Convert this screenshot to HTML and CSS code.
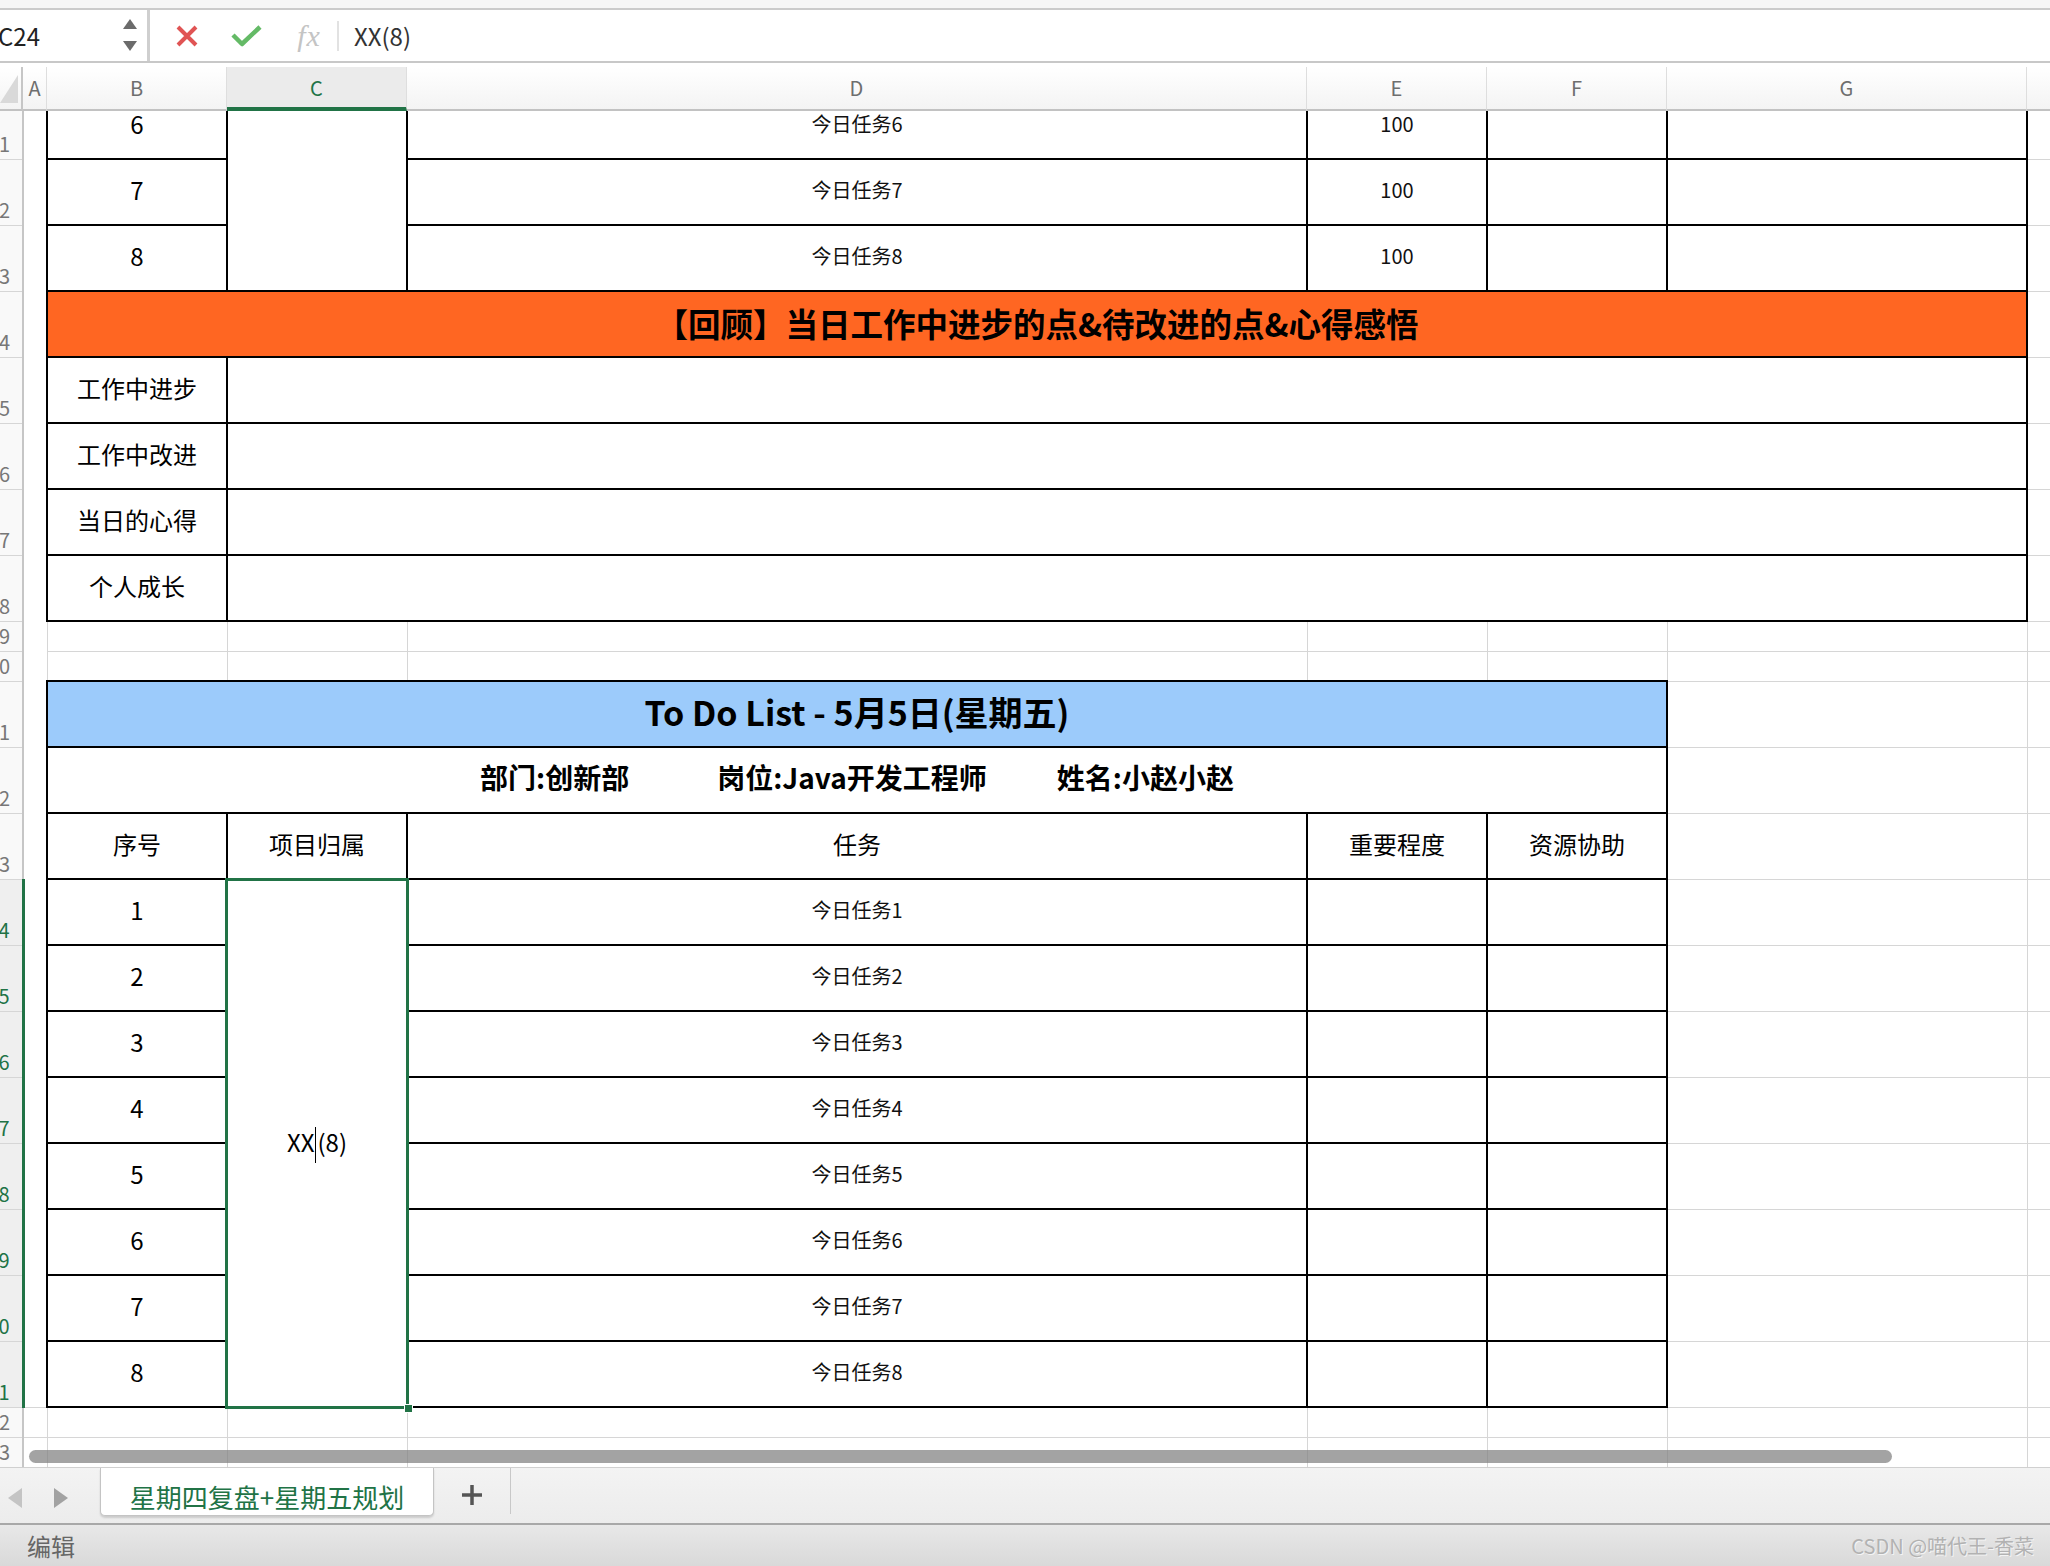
FILE: index.html
```html
<!DOCTYPE html>
<html lang="zh-CN">
<head>
<meta charset="utf-8">
<title>星期四复盘+星期五规划</title>
<link rel="stylesheet" href="styles.css">
</head>
<body>
<div class="app">
  <div class="topstrip"></div>
  <div class="formulabar">
    <div class="namebox">
      <span class="ref">C24</span>
      <svg class="spin" width="14" height="33" viewBox="0 0 14 33"><path d="M7 0 L14 10 L0 10Z" fill="#6b6b6b"/><path d="M0 22 L14 22 L7 32Z" fill="#6b6b6b"/></svg>
    </div>
    <div class="fbtn"><svg width="24" height="22" viewBox="0 0 24 22"><path d="M3 2 L21 20 M21 2 L3 20" stroke="#e05454" stroke-width="4" fill="none"/></svg></div>
    <div class="fbtn"><svg width="32" height="22" viewBox="0 0 32 22"><path d="M2 10 L11 19 L29 2" stroke="#64ba66" stroke-width="4.5" fill="none" stroke-linejoin="round"/></svg></div>
    <div class="fbtn fx">fx</div>
    <div class="fsep"></div>
    <div class="fcontent">XX(8)</div>
  </div>
  <div class="fbline"></div>
  <div class="colheads">
    <div class="ch corner"><svg class="tri" width="18" height="28" viewBox="0 0 18 28"><path d="M18 0 L18 28 L0 28Z" fill="#d9d9d9"/></svg></div>
    <div class="ch w-a">A</div>
    <div class="ch w-b">B</div>
    <div class="ch w-c sel">C</div>
    <div class="ch w-d">D</div>
    <div class="ch w-e">E</div>
    <div class="ch w-f">F</div>
    <div class="ch w-g">G</div>
    <div class="ch w-h"></div>
  </div>
  <div class="sheet">
    <table class="grid">
      <colgroup>
        <col class="w-rh"><col class="w-a"><col class="w-b"><col class="w-c"><col class="w-d"><col class="w-e"><col class="w-f"><col class="w-g"><col class="w-h">
      </colgroup>
      <tr class="h66"><th class="rh"><div>11</div></th><td class="a"></td><td class="k n">6</td><td class="k" rowspan="3"></td><td class="k s">今日任务6</td><td class="k s">100</td><td class="k"></td><td class="k"></td><td></td></tr>
      <tr class="h66"><th class="rh"><div>12</div></th><td class="a"></td><td class="k n">7</td><td class="k s">今日任务7</td><td class="k s">100</td><td class="k"></td><td class="k"></td><td></td></tr>
      <tr class="h66"><th class="rh"><div>13</div></th><td class="a"></td><td class="k n">8</td><td class="k s">今日任务8</td><td class="k s">100</td><td class="k"></td><td class="k"></td><td></td></tr>
      <tr class="h66"><th class="rh"><div>14</div></th><td class="a"></td><td class="k orange" colspan="6">【回顾】当日工作中进步的点&amp;待改进的点&amp;心得感悟</td><td></td></tr>
      <tr class="h66"><th class="rh"><div>15</div></th><td class="a"></td><td class="k l">工作中进步</td><td class="k" colspan="5"></td><td></td></tr>
      <tr class="h66"><th class="rh"><div>16</div></th><td class="a"></td><td class="k l">工作中改进</td><td class="k" colspan="5"></td><td></td></tr>
      <tr class="h66"><th class="rh"><div>17</div></th><td class="a"></td><td class="k l">当日的心得</td><td class="k" colspan="5"></td><td></td></tr>
      <tr class="h66"><th class="rh"><div>18</div></th><td class="a"></td><td class="k l">个人成长</td><td class="k" colspan="5"></td><td></td></tr>
      <tr class="h30"><th class="rh"><div>19</div></th><td class="a"></td><td></td><td></td><td></td><td></td><td></td><td></td><td></td></tr>
      <tr class="h30"><th class="rh"><div>20</div></th><td class="a"></td><td></td><td></td><td></td><td></td><td></td><td></td><td></td></tr>
      <tr class="h66"><th class="rh"><div>21</div></th><td class="a"></td><td class="k blue" colspan="5">To Do List - 5月5日(星期五)</td><td></td><td></td></tr>
      <tr class="h66"><th class="rh"><div>22</div></th><td class="a"></td><td class="k info" colspan="5"><span>部门:创新部</span><span class="gap1">岗位:Java开发工程师</span><span class="gap2">姓名:小赵小赵</span></td><td></td><td></td></tr>
      <tr class="h66"><th class="rh"><div>23</div></th><td class="a"></td><td class="k l">序号</td><td class="k l">项目归属</td><td class="k l">任务</td><td class="k l">重要程度</td><td class="k l">资源协助</td><td></td><td></td></tr>
      <tr class="h66"><th class="rh sel"><div>24</div></th><td class="a"></td><td class="k n">1</td><td class="k l cur" rowspan="8"><div class="selbox"><i class="handle"></i></div>XX<span class="caret"></span>(8)</td><td class="k s">今日任务1</td><td class="k"></td><td class="k"></td><td></td><td></td></tr>
      <tr class="h66"><th class="rh sel"><div>25</div></th><td class="a"></td><td class="k n">2</td><td class="k s">今日任务2</td><td class="k"></td><td class="k"></td><td></td><td></td></tr>
      <tr class="h66"><th class="rh sel"><div>26</div></th><td class="a"></td><td class="k n">3</td><td class="k s">今日任务3</td><td class="k"></td><td class="k"></td><td></td><td></td></tr>
      <tr class="h66"><th class="rh sel"><div>27</div></th><td class="a"></td><td class="k n">4</td><td class="k s">今日任务4</td><td class="k"></td><td class="k"></td><td></td><td></td></tr>
      <tr class="h66"><th class="rh sel"><div>28</div></th><td class="a"></td><td class="k n">5</td><td class="k s">今日任务5</td><td class="k"></td><td class="k"></td><td></td><td></td></tr>
      <tr class="h66"><th class="rh sel"><div>29</div></th><td class="a"></td><td class="k n">6</td><td class="k s">今日任务6</td><td class="k"></td><td class="k"></td><td></td><td></td></tr>
      <tr class="h66"><th class="rh sel"><div>30</div></th><td class="a"></td><td class="k n">7</td><td class="k s">今日任务7</td><td class="k"></td><td class="k"></td><td></td><td></td></tr>
      <tr class="h66"><th class="rh sel"><div>31</div></th><td class="a"></td><td class="k n">8</td><td class="k s">今日任务8</td><td class="k"></td><td class="k"></td><td></td><td></td></tr>
      <tr class="h30"><th class="rh"><div>32</div></th><td class="a2"></td><td></td><td></td><td></td><td></td><td></td><td></td><td></td></tr>
      <tr class="h30"><th class="rh"><div>33</div></th><td class="a2"></td><td></td><td></td><td></td><td></td><td></td><td></td><td></td></tr>
      <tr class="h30"><th class="rh"><div>34</div></th><td class="a2"></td><td></td><td></td><td></td><td></td><td></td><td></td><td></td></tr>
    </table>
    <div class="hscroll"></div>
  </div>
  <div class="tabbar">
    <div class="navs">
      <svg width="14" height="20" viewBox="0 0 14 20"><path d="M14 0 L14 20 L0 10Z" fill="#c4c4c4"/></svg>
      <svg width="14" height="20" viewBox="0 0 14 20"><path d="M0 0 L14 10 L0 20Z" fill="#a2a2a2"/></svg>
    </div>
    <div class="tab">星期四复盘+星期五规划</div>
    <div class="addtab"><svg width="20" height="20" viewBox="0 0 20 20"><path d="M10 0 V20 M0 10 H20" stroke="#555" stroke-width="3.5"/></svg></div>
    <div class="tabsep"></div>
  </div>
  <div class="status">
    <span class="mode">编辑</span>
    <span class="mark">CSDN @喵代王-香菜</span>
  </div>
</div>
</body>
</html>
```

FILE: styles.css
```css
* { box-sizing: border-box; margin: 0; padding: 0; }
html, body { width: 2050px; height: 1566px; overflow: hidden; background: #fff; }
body { font-family: "Noto Sans CJK SC", "Noto Sans", sans-serif; color: #000; }
.app { width: 2050px; height: 1566px; display: flex; flex-direction: column; }

.topstrip { height: 10px; background: #f6f6f6; border-bottom: 2px solid #cbcbcb; flex: none; }
.formulabar { height: 51px; flex: none; display: flex; align-items: center; background: #fff; }
.namebox { width: 150px; height: 100%; display: flex; align-items: center; justify-content: space-between; border-right: 3px solid #cfcfcf; padding-right: 10px; }
.ref { font-size: 24px; color: #222; margin-left: -2px; line-height: 1; }
.fbtn { width: 60px; height: 100%; display: flex; align-items: center; justify-content: center; }
.namebox + .fbtn { margin-left: 7px; }
.fx { font-family: "Liberation Serif", serif; font-style: italic; font-size: 30px; color: #c4c4c4; letter-spacing: 1px; padding-left: 4px; }
.fsep { width: 2px; height: 30px; background: #e2e2e2; }
.fcontent { padding-left: 15px; font-size: 24px; color: #333; line-height: 1; }
.fbline { height: 6px; flex: none; border-top: 2px solid #c8c8c8; background: #fff; }

.colheads { height: 44px; flex: none; display: flex; background: linear-gradient(#ffffff, #f3f3f3); }
.ch { height: 44px; flex: none; display: flex; align-items: center; justify-content: center; font-size: 20px; color: #6e6e6e; border-right: 1px solid #dedede; border-bottom: 2px solid #c2c2c2; line-height: 1; overflow: hidden; }
.ch.sel { background: #ebebeb; color: #217346; border-bottom: 4px solid #217346; padding-top: 2px; }
.corner { width: 23px; border-right: 2px solid #c6c6c6; align-items: flex-end; justify-content: flex-start; padding-bottom: 6px; }
.ch.w-h { border-right: none; }
.w-rh { width: 23px; }
.w-a { width: 24px; }
.w-b { width: 180px; }
.w-c { width: 180px; }
.w-d { width: 900px; }
.w-e { width: 180px; }
.w-f { width: 180px; }
.w-g { width: 360px; }
.w-h { width: 23px; }

.sheet { height: 1356px; flex: none; overflow: hidden; position: relative; }
.grid { margin-top: -19px; width: 2050px; table-layout: fixed; border-collapse: collapse; }
.grid tr.h66 { height: 66px; }
.grid tr.h30 { height: 30px; }
.grid td { border: 1px solid #d6d6d6; padding: 0 0 4px 0; text-align: center; vertical-align: middle; line-height: 1.2; white-space: nowrap; }
.grid td.a { border-top: none; border-bottom: none; border-left: none; }
.grid td.a2 { border-left: none; }
.grid td.k { border: 2px solid #000; }

.rh { background: #f9f9f9; border-right: 2px solid #c6c6c6; border-bottom: 1px solid #d6d6d6; vertical-align: bottom; font-weight: normal; padding: 0; }
.rh div { direction: rtl; overflow: hidden; white-space: nowrap; padding-right: 12px; padding-bottom: 5px; font-size: 20px; color: #777; line-height: 1; }
.rh.sel { background: #efefef; border-right: 3px solid #217346; }
.rh.sel div { color: #217346; }

.n { font-size: 24px; }
.s { font-size: 20px; color: #111; }
.l { font-size: 24px; }
.orange { background: #ff6622; font-size: 32.5px; font-weight: bold; }
.blue { background: #9ccbfb; font-size: 34px; font-weight: bold; }
.info { font-size: 28px; font-weight: bold; }
.gap1 { margin-left: 88px; }
.gap2 { margin-left: 70px; }

.grid td.cur { position: relative; padding: 4px 0 0 0; }
.selbox { position: absolute; top: -2px; left: -3px; right: -3px; bottom: -3px; border: 3px solid #217346; pointer-events: none; }
.handle { position: absolute; right: -7px; bottom: -7px; width: 9px; height: 9px; background: #217346; border: 1px solid #fff; }
.caret { display: inline-block; width: 1px; height: 36px; background: #000; vertical-align: middle; margin: 0 1px; }

.hscroll { position: absolute; left: 29px; top: 1339px; width: 1863px; height: 13px; border-radius: 7px; background: rgba(128,128,128,0.72); }

.tabbar { height: 56px; flex: none; display: flex; align-items: flex-start; background: linear-gradient(#f3f3f3, #ececec); border-top: 1px solid #d0d0d0; }
.navs { width: 100px; height: 100%; display: flex; align-items: center; gap: 32px; padding-left: 8px; padding-top: 4px; }
.tab { width: 334px; height: 48px; background: #fff; border: 1px solid #c4c4c4; border-top: none; border-radius: 0 0 5px 5px; box-shadow: 0 2px 2px rgba(0,0,0,0.14); display: flex; align-items: center; justify-content: center; font-size: 26px; color: #217346; padding-top: 10px; }
.addtab { width: 76px; height: 100%; display: flex; align-items: center; justify-content: center; padding-bottom: 2px; }
.tabsep { width: 1px; height: 46px; background: #c8c8c8; }

.status { height: 43px; flex: none; display: flex; align-items: center; justify-content: space-between; padding: 0 16px 0 27px; border-top: 2px solid #a8a8a8; background: linear-gradient(#e8e8e8, #d9d9d9); }
.mode { font-size: 24px; color: #666; }
.mark { font-size: 20px; color: #b2b2b2; text-shadow: 1px 1px 0 #f4f4f4; }
```
